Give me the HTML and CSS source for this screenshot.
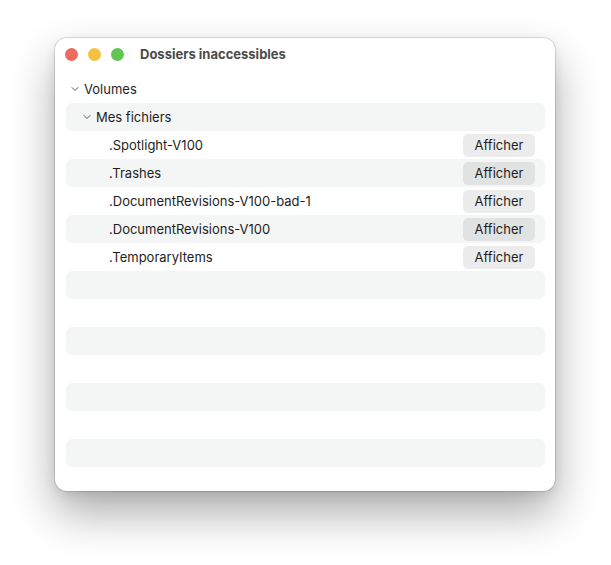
FILE: index.html
```html
<!DOCTYPE html>
<html lang="fr">
<head>
<meta charset="utf-8">
<title>Dossiers inaccessibles</title>
<link rel="stylesheet" href="styles.css">
</head>
<body>
<div class="window">
  <div class="titlebar">
    <div class="lights">
      <span class="light red"></span>
      <span class="light yellow"></span>
      <span class="light green"></span>
    </div>
    <div class="title">Dossiers inaccessibles</div>
  </div>
  <div class="list">
    <div class="row lvl0">
      <svg class="chev" width="8" height="6" viewBox="0 0 8 6"><path d="M1 1.5 L4 4.5 L7 1.5" fill="none" stroke="#5a5a5a" stroke-width="1" stroke-linecap="round" stroke-linejoin="round"/></svg>
      <span class="label">Volumes</span>
    </div>
    <div class="row lvl1 striped">
      <svg class="chev" width="8" height="6" viewBox="0 0 8 6"><path d="M1 1.5 L4 4.5 L7 1.5" fill="none" stroke="#5a5a5a" stroke-width="1" stroke-linecap="round" stroke-linejoin="round"/></svg>
      <span class="label">Mes fichiers</span>
    </div>
    <div class="row lvl2">
      <span class="label">.Spotlight-V100</span>
      <button class="btn">Afficher</button>
    </div>
    <div class="row lvl2 striped">
      <span class="label">.Trashes</span>
      <button class="btn">Afficher</button>
    </div>
    <div class="row lvl2">
      <span class="label">.DocumentRevisions-V100-bad-1</span>
      <button class="btn">Afficher</button>
    </div>
    <div class="row lvl2 striped">
      <span class="label">.DocumentRevisions-V100</span>
      <button class="btn">Afficher</button>
    </div>
    <div class="row lvl2">
      <span class="label">.TemporaryItems</span>
      <button class="btn">Afficher</button>
    </div>
    <div class="row striped"></div>
    <div class="row"></div>
    <div class="row striped"></div>
    <div class="row"></div>
    <div class="row striped"></div>
    <div class="row"></div>
    <div class="row striped"></div>
  </div>
</div>
</body>
</html>
```

FILE: styles.css
```css
html, body {
  margin: 0;
  padding: 0;
  background: #ffffff;
}
body {
  box-sizing: border-box;
  min-height: 565px;
  padding: 38px 0 74px 55px;
  font-family: Inter, "Noto Sans", "Liberation Sans", sans-serif;
  font-size: 13px;
  color: #1e1e1e;
}
.window {
  width: 500px;
  height: 453px;
  box-sizing: border-box;
  background: #ffffff;
  border-radius: 12px;
  overflow: hidden;
  box-shadow: 0 0 0 1px rgba(0,0,0,0.12), 0 22px 45px rgba(0,0,0,0.33), 0 4px 12px rgba(0,0,0,0.08);
}
.titlebar {
  height: 32px;
  display: flex;
  align-items: center;
  padding-left: 10px;
}
.lights {
  display: flex;
  gap: 10px;
}
.light {
  width: 13px;
  height: 13px;
  border-radius: 50%;
}
.red { background: #ed6a5e; }
.yellow { background: #f5c143; }
.green { background: #61c554; }
.title {
  margin-left: 16px;
  font-weight: 700;
  font-size: 13px;
  color: #4b4b4b;
}
.list {
  padding: 5px 10px 0 11px;
}
.row {
  height: 28px;
  display: flex;
  align-items: center;
  border-radius: 6px;
  padding-right: 10px;
}
.striped {
  background: #f4f5f5;
}
.lvl0 { padding-left: 5px; }
.lvl1 { padding-left: 17px; }
.lvl2 { padding-left: 43px; }
.chev {
  width: 8px;
  height: 6px;
  margin-right: 5px;
  flex: none;
}
.label {
  flex: 1;
  white-space: nowrap;
}
.btn {
  width: 72px;
  height: 23px;
  border: none;
  border-radius: 5px;
  background: rgba(0,0,0,0.075);
  font-family: inherit;
  font-size: 13px;
  color: #1e1e1e;
  padding: 0;
}
```
